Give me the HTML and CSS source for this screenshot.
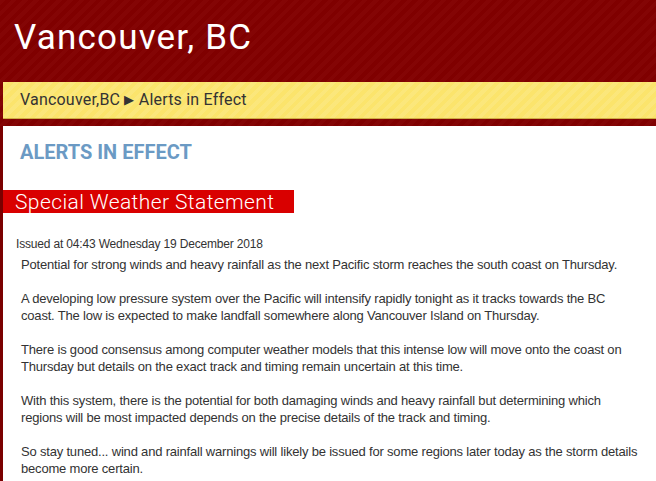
FILE: index.html
```html
<!DOCTYPE html>
<html lang="en">
<head>
  <meta charset="UTF-8">
  <title>Vancouver, BC - Alerts in Effect</title>
  <link rel="stylesheet" href="styles.css">
</head>
<body>

  <div class="header">
    <h1>Vancouver, BC</h1>
    <div class="crumbs">Vancouver,BC <span class="arrow">&#9654;</span> Alerts in Effect</div>
  </div>

  <div class="page">
    <h2>ALERTS IN EFFECT</h2>

    <div class="alert-title">Special Weather Statement</div>

    <div class="issued">Issued at 04:43 Wednesday 19 December 2018</div>

    <div class="alert-text">
      <p>Potential for strong winds and heavy rainfall as the next Pacific storm reaches the south coast on Thursday.</p>
      <p>A developing low pressure system over the Pacific will intensify rapidly tonight as it tracks towards the BC coast. The low is expected to make landfall somewhere along Vancouver Island on Thursday.</p>
      <p>There is good consensus among computer weather models that this intense low will move onto the coast on Thursday but details on the exact track and timing remain uncertain at this time.</p>
      <p>With this system, there is the potential for both damaging winds and heavy rainfall but determining which regions will be most impacted depends on the precise details of the track and timing.</p>
      <p>So stay tuned... wind and rainfall warnings will likely be issued for some regions later today as the storm details become more certain.</p>
    </div>
  </div>

</body>
</html>
```

FILE: styles.css
```css
body {
  margin: 0;
  background: #7a0000;
  font-family: 'Liberation Sans', Arial, sans-serif;
  color: #333;
}

.header {
  background-color: #820000;
  background-image: repeating-linear-gradient(135deg, rgba(255,255,255,0.018) 0 4px, rgba(0,0,0,0.02) 4px 8px);
  padding-bottom: 7px;
}

.header h1 {
  margin: 0;
  height: 82px;
  padding-left: 14px;
  font-family: Roboto, 'Open Sans', sans-serif;
  font-weight: 400;
  font-size: 35px;
  letter-spacing: 1.2px;
  line-height: 76px;
  color: #fff;
}

.crumbs {
  margin-left: 3px;
  height: 36px;
  padding-left: 17px;
  line-height: 36px;
  font-family: Roboto, 'Open Sans', sans-serif;
  font-size: 16px;
  letter-spacing: 0.2px;
  color: #333;
  background-color: #fbe46c;
  background-image: repeating-linear-gradient(135deg, rgba(255,255,255,0.1) 0 4px, rgba(255,255,255,0) 4px 8px);
  border-bottom: 1px solid #cfae45;
}

.crumbs .arrow {
  font-size: 13px;
  position: relative;
  top: -1px;
}

.page {
  margin-left: 3px;
  background: #fff;
  padding: 14px 16px 20px 0;
  min-height: 400px;
}

h2 {
  margin: 0 0 26px 17px;
  font-family: Roboto, 'Open Sans', sans-serif;
  font-size: 20px;
  line-height: 24px;
  font-weight: 700;
  color: #6b9ac4;
}

.alert-title {
  width: 279px;
  height: 23px;
  padding-left: 12px;
  background: #d90000;
  color: #fff;
  font-family: Roboto, 'Open Sans', sans-serif;
  font-weight: 300;
  font-size: 21px;
  letter-spacing: 0.4px;
  line-height: 24px;
}

.issued {
  margin: 24px 0 0 13px;
  font-size: 12px;
  letter-spacing: -0.17px;
  line-height: 15px;
}

.alert-text {
  margin-left: 18px;
  padding-top: 4px;
  font-size: 13px;
  letter-spacing: -0.19px;
  line-height: 17px;
}

.alert-text p {
  margin: 0 0 17px;
}
```
